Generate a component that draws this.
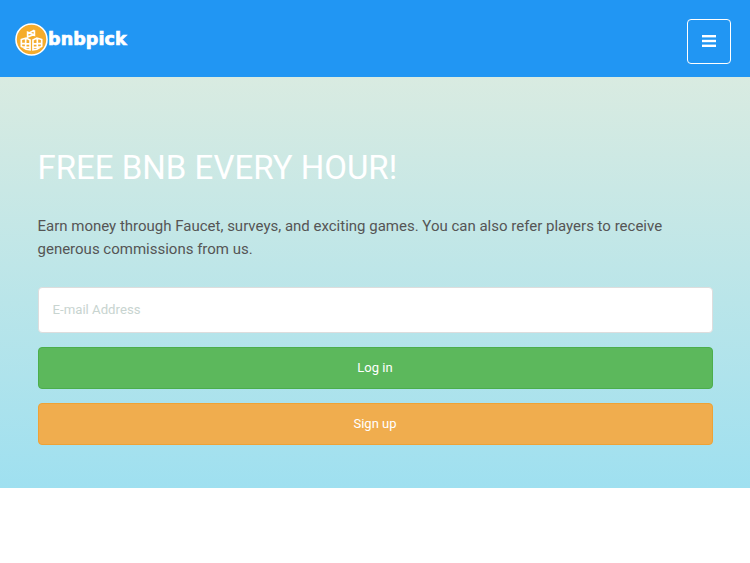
<style>
  :global(body) { margin: 0; background: #fff; font-family: Roboto, sans-serif; }
  .nav { height: 77px; background: #2196f3; display: flex; align-items: center; justify-content: space-between; padding: 5px 19px 0 15px; box-sizing: border-box; }
  .brand { display: flex; align-items: center; margin-top: -3px; }
  .word { font-family: "DejaVu Sans", sans-serif; font-weight: 700; font-size: 17.5px; color: #fff; -webkit-text-stroke: 0.7px #fff; letter-spacing: 0.1px; margin-left: 0; line-height: 1; margin-top: 0; }
  .toggle { width: 44px; height: 45px; box-sizing: border-box; border: 1px solid #fff; border-radius: 4px; background: transparent; display: flex; align-items: center; justify-content: center; padding: 0; }
  .hero { height: 411px; box-sizing: border-box; background: linear-gradient(#d9ebe1, #9fe0f0); padding: 67px 37.5px 0; }
  h1 { margin: 0; font-size: 33px; line-height: 48px; font-weight: 400; color: #fff; }
  p { margin: 23px 0 0; font-size: 15px; line-height: 23px; color: #555; }
  form { margin-top: 26px; display: flex; flex-direction: column; }
  input { height: 46px; box-sizing: border-box; width: 100%; border: 1px solid #ddd; border-radius: 4px; background: #fff; padding: 0 14px 2px; font: 13.2px Roboto, sans-serif; outline: none; }
  input::placeholder { color: #c8d4d0; opacity: 1; }
  button.action { height: 42px; box-sizing: border-box; border-radius: 4px; color: #fff; font: 13px Roboto, sans-serif; padding: 0 0 2px; }
  .login { margin-top: 14px; background: #5cb85c; border: 1px solid #4cae4c; }
  .signup { margin-top: 14px; background: #f0ad4e; border: 1px solid #eea236; }
</style>

<header class="nav">
  <div class="brand">
    <svg width="33" height="33" viewBox="0 0 34 34" aria-hidden="true">
      <circle cx="17" cy="17" r="16" fill="#f5ac2c" stroke="#fff" stroke-width="1.6" />
      <g fill="none" stroke="#fff" stroke-width="1.7">
        <path d="M13 11l7-3.5M20 7.5v5l-7-3v5l7-3" />
        <path d="M6.5 17l5-1.5 4 2v10l-4 -.5-5-3zM6.5 21l9 .5M6.5 24.5l9 .5M11 16v11" />
        <path d="M27.5 17l-5-1.5-4 2v10l4 -.5 5-3zM27.5 21l-9 .5M27.5 24.5l-9 .5M23 16v11" />
      </g>
    </svg>
    <span class="word">bnbpick</span>
  </div>
  <button class="toggle" aria-label="Menu">
    <svg width="14" height="14" viewBox="0 0 14 14" fill="#fff" aria-hidden="true">
      <rect x="0" y="1" width="14" height="2.4" />
      <rect x="0" y="5.8" width="14" height="2.4" />
      <rect x="0" y="10.6" width="14" height="2.4" />
    </svg>
  </button>
</header>

<section class="hero">
  <h1>FREE BNB EVERY HOUR!</h1>
  <p>Earn money through Faucet, surveys, and exciting games. You can also refer players to receive generous commissions from us.</p>
  <form>
    <input type="email" placeholder="E-mail Address" />
    <button type="button" class="action login">Log in</button>
    <button type="button" class="action signup">Sign up</button>
  </form>
</section>
